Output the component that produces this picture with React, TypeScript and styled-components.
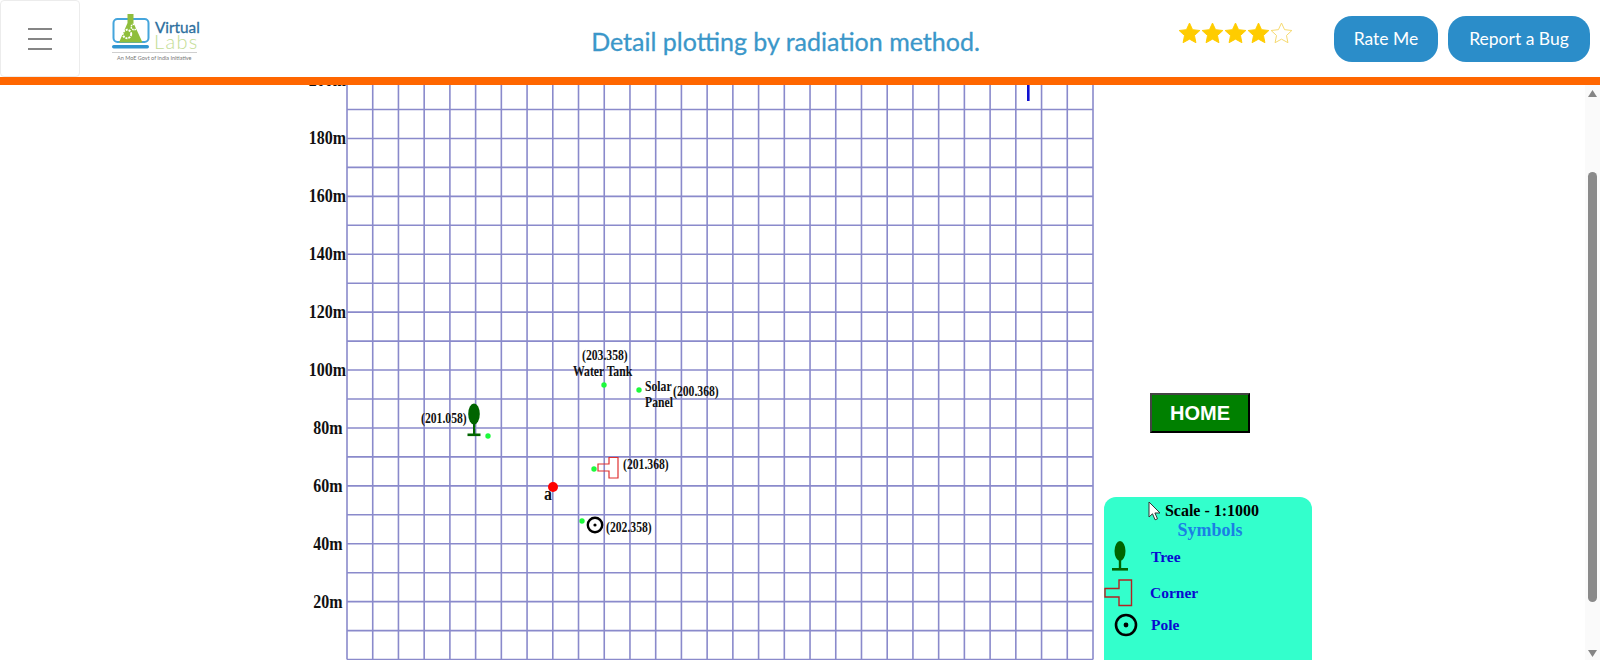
import { useEffect, useRef } from "react";
import styled, { createGlobalStyle } from "styled-components";

const Global = createGlobalStyle`
  html, body { margin: 0; padding: 0; height: 100%; overflow: hidden; background: #fff; }
  #root { height: 100%; }
`;

const Page = styled.div`
  height: 660px;
  display: flex;
  flex-direction: column;
  font-family: "Liberation Serif", serif;
`;

const Header = styled.header`
  flex: none;
  height: 77px;
  display: flex;
  align-items: stretch;
  border-bottom: 8px solid #ff6600;
  background: #fff;
`;

const MenuButton = styled.button`
  flex: none;
  width: 80px;
  height: 77px;
  padding: 0;
  background: #fff;
  border: 1px solid #ececec;
  border-radius: 4px;
  display: flex;
  flex-direction: column;
  align-items: center;
  justify-content: center;
  gap: 8px;
`;

const MenuBar = styled.span`
  display: block;
  width: 24px;
  height: 2px;
  background: #858585;
`;

const LogoBox = styled.div`
  flex: none;
  margin: 12px 0 0 31px;
  width: 90px;
  height: 52px;
`;

const Title = styled.h1`
  flex: 1;
  margin: 9px 0 0;
  text-align: center;
  font: 400 25px "Lato", sans-serif;
  -webkit-text-stroke: 0.3px #3b97c9;
  line-height: 64px;
  color: #3b97c9;
  padding-left: 192px;
  white-space: nowrap;
`;

const Rating = styled.div`
  flex: none;
  display: flex;
  margin: 21px 41px 0 0;
  height: 24px;
`;

const HeaderButton = styled.button<{ $w: number }>`
  flex: none;
  width: ${({ $w }) => $w}px;
  height: 46px;
  margin: 16px 10px 0 0;
  padding: 0 0 2px;
  border: none;
  border-radius: 18px;
  background: #2b8dc9;
  color: #fff;
  font: 400 17.5px "Lato", sans-serif;
`;

const Body = styled.div`
  flex: 1;
  min-height: 0;
  display: flex;
`;

const Scroller = styled.main`
  flex: 1;
  overflow: hidden;
`;

const ScrollBar = styled.div`
  flex: none;
  width: 15px;
  background: #fafafa;
  display: flex;
  flex-direction: column;
  align-items: center;
`;

const ScrollArrow = styled.span<{ $down?: boolean }>`
  display: block;
  width: 9px;
  height: 7px;
  margin-top: ${({ $down }) => ($down ? 48 : 5)}px;
  background: #858585;
  clip-path: ${({ $down }) =>
    $down ? "polygon(0 0, 100% 0, 50% 100%)" : "polygon(50% 0, 100% 100%, 0 100%)"};
`;

const ScrollThumb = styled.span`
  display: block;
  width: 9px;
  height: 430px;
  margin-top: 75px;
  border-radius: 5px;
  background: #8a8a8a;
`;

const Content = styled.div`
  height: 735px;
  display: flex;
  align-items: flex-start;
`;

const PlotSheet = styled.div`
  flex: none;
  width: 1094px;
  height: 735px;
`;

const Side = styled.aside`
  flex: none;
  margin-left: 10px;
  width: 208px;
  padding-top: 406px;
`;

const HomeButton = styled.button`
  display: block;
  margin-left: 46px;
  width: 100px;
  height: 40px;
  padding: 0;
  background: #008000;
  color: #fff;
  font: 700 20px "Liberation Sans", sans-serif;
  border: 2px solid;
  border-color: #444 #000 #000 #444;
`;

const Legend = styled.section`
  position: relative;
  margin-top: 64px;
  height: 200px;
  background: #33ffcc;
  border-radius: 12px 12px 0 0;
`;

const ScaleText = styled.div`
  padding: 4px 0 0 8px;
  text-align: center;
  font-size: 16px;
  font-weight: 700;
  line-height: 19px;
  color: #000;
`;

const SymbolsTitle = styled.div`
  padding-left: 4px;
  text-align: center;
  font-size: 18px;
  font-weight: 700;
  line-height: 20px;
  color: #1a80e4;
`;

const LegendRow = styled.div<{ $h: number; $gap: number }>`
  display: flex;
  align-items: center;
  height: ${({ $h }) => $h}px;
  gap: ${({ $gap }) => $gap}px;
`;

const LegendIcon = styled.span<{ $left: number; $w: number }>`
  display: flex;
  justify-content: center;
  margin-left: ${({ $left }) => $left}px;
  width: ${({ $w }) => $w}px;
`;

const LegendLabel = styled.span`
  font-size: 15.5px;
  font-weight: 700;
  color: #0a0ad0;
`;

const Cursor = styled.svg`
  position: absolute;
  left: 44px;
  top: 4px;
`;

const Star = ({ filled }: { filled: boolean }) => (
  <svg width="23" height="24" viewBox="0 0 24 24">
    <path
      d="M12 1.6l3.2 6.9 7.6.9-5.6 5.2 1.5 7.5L12 18.4l-6.7 3.7 1.5-7.5L1.2 9.4l7.6-.9z"
      fill={filled ? "#ffcc00" : "#fff"}
      stroke={filled ? "#ffcc00" : "#f5d76a"}
      strokeWidth="1"
    />
  </svg>
);

const Logo = () => (
  <svg width="90" height="52" viewBox="0 0 90 52">
    <rect x="2.5" y="7" width="35" height="23" rx="4" fill="none" stroke="#45a5dc" strokeWidth="2" />
    <rect x="1" y="33" width="37" height="3.5" rx="1.7" fill="#2f95d0" />
    <path d="M16.5 2h6v9l9 19.5H8l8.5-19.5z" fill="#8fbe3c" />
    <circle cx="16" cy="22" r="4.2" fill="none" stroke="#fff" strokeWidth="2" strokeDasharray="2 1" />
    <circle cx="23" cy="15" r="2.8" fill="none" stroke="#fff" strokeWidth="1.5" strokeDasharray="1.5 .8" />
    <text x="44" y="20.5" fontFamily="Lato, sans-serif" fontSize="15.3" fill="#2d6f9e" stroke="#2d6f9e" strokeWidth="0.3">
      Virtual
    </text>
    <text x="43" y="36.5" fontFamily="Lato, sans-serif" fontSize="20" fontWeight="300" letterSpacing="1.3" fill="#c3dd94">
      Labs
    </text>
    <rect x="1" y="40" width="85" height="1" fill="#cfcfcf" />
    <text x="6" y="47.5" fontFamily="Lato, sans-serif" fontSize="5.5" fill="#777">
      An MoE Govt of India Initiative
    </text>
  </svg>
);

const TreeIcon = () => (
  <svg width="16" height="32" viewBox="0 0 16 32">
    <ellipse cx="8" cy="10" rx="5.5" ry="10" fill="#006400" />
    <rect x="6.8" y="16" width="2.4" height="13" fill="#006400" />
    <rect x="0" y="27" width="16" height="2.6" fill="#006400" />
  </svg>
);

const CornerIcon = () => (
  <svg width="29" height="28" viewBox="0 0 29 28">
    <path d="M1 9.5h14V1h12.5v25.5H15V18H1z" fill="none" stroke="#b52222" strokeWidth="1.4" />
  </svg>
);

const PoleIcon = () => (
  <svg width="24" height="24" viewBox="0 0 24 24">
    <circle cx="12" cy="12" r="10" fill="none" stroke="#000" strokeWidth="2.6" />
    <circle cx="12" cy="12" r="2.4" fill="#000" />
  </svg>
);

const LEFT = 347;
const RIGHT = 1093;
const COLS = 29;
const ROWS = 23;
const TOP_Y = 6.7;
const ROW_H = 28.95;
const OFFSET = 13; // plot y = screen y + OFFSET, once scrolled
const STRETCH = 1.18; // the sheet in the picture is stretched up and down

const yOf = (screen: number) => screen + OFFSET;

const PlotText = ({ x, y, size, anchor, children }: { x: number; y: number; size?: number; anchor?: "end"; children: string }) => (
  <text transform={`translate(${x} ${yOf(y)}) scale(1 ${STRETCH})`} fontSize={size} textAnchor={anchor}>
    {children}
  </text>
);

const Plot = () => {
  const cell = (RIGHT - LEFT) / COLS;
  const bottom = TOP_Y + ROWS * ROW_H;
  return (
    <svg width="1094" height="735" style={{ display: "block" }}>
      {Array.from({ length: COLS + 1 }, (_, i) => (
        <line key={i} x1={LEFT + i * cell} x2={LEFT + i * cell} y1={TOP_Y} y2={bottom} stroke="#8a8acb" strokeWidth="1.6" />
      ))}
      {Array.from({ length: ROWS + 1 }, (_, i) => (
        <line key={i} y1={TOP_Y + i * ROW_H} y2={TOP_Y + i * ROW_H} x1={LEFT} x2={RIGHT} stroke="#8a8acb" strokeWidth="1.6" />
      ))}
      <g fontFamily="Liberation Serif, serif" fontWeight="700" fontSize="16" fill="#111">
        {[200, 180, 160, 140, 120, 100, 80, 60, 40, 20].map((v, i) => (
          <PlotText key={v} x={v >= 100 ? 346 : 342.5} y={86 + i * 57.95} anchor="end">
            {`${v}m`}
          </PlotText>
        ))}
      </g>
      <rect x="1027" y={yOf(85)} width="2.6" height="16" fill="#1010d0" />
      <g fontFamily="Liberation Serif, serif" fontWeight="700" fontSize="11.7" fill="#111">
        <PlotText x={582} y={360}>(203.358)</PlotText>
        <PlotText x={573} y={376}>Water Tank</PlotText>
        <PlotText x={645} y={391}>Solar</PlotText>
        <PlotText x={645} y={407}>Panel</PlotText>
        <PlotText x={673} y={396}>(200.368)</PlotText>
        <PlotText x={421} y={423}>(201.058)</PlotText>
        <PlotText x={623} y={469}>(201.368)</PlotText>
        <PlotText x={606} y={532}>(202.358)</PlotText>
        <PlotText x={544} y={500} size={16}>a</PlotText>
      </g>
      <g fill="#1dfa3c">
        <circle cx="604" cy={yOf(385)} r="2.7" />
        <circle cx="639" cy={yOf(390)} r="2.7" />
        <circle cx="488" cy={yOf(436)} r="2.7" />
        <circle cx="594" cy={yOf(469)} r="2.7" />
        <circle cx="582" cy={yOf(521)} r="2.7" />
      </g>
      <circle cx="553" cy={yOf(487)} r="5" fill="#ff0000" />
      <g fill="#006400">
        <ellipse cx="474" cy={yOf(414)} rx="5.8" ry="10.5" />
        <rect x="473" y={yOf(420)} width="2.2" height="15" />
        <rect x="467.5" y={yOf(433.5)} width="13" height="2.6" />
      </g>
      <path d={`M598 ${yOf(464)}h11v-6.5h9v20.5h-9v-7h-11z`} fill="none" stroke="#e03030" strokeWidth="1.2" />
      <circle cx="595" cy={yOf(525)} r="7.2" fill="#fff" stroke="#000" strokeWidth="2.4" />
      <circle cx="595" cy={yOf(525)} r="1.6" fill="#000" />
    </svg>
  );
};

export default function App() {
  const scroller = useRef<HTMLElement>(null);

  useEffect(() => {
    if (scroller.current) scroller.current.scrollTop = 98;
  }, []);

  return (
    <Page>
      <Global />
      <Header>
        <MenuButton aria-label="menu">
          <MenuBar />
          <MenuBar />
          <MenuBar />
        </MenuButton>
        <LogoBox>
          <Logo />
        </LogoBox>
        <Title>Detail plotting by radiation method.</Title>
        <Rating>
          {[true, true, true, true, false].map((f, i) => (
            <Star key={i} filled={f} />
          ))}
        </Rating>
        <HeaderButton $w={104}>Rate Me</HeaderButton>
        <HeaderButton $w={142}>Report a Bug</HeaderButton>
      </Header>
      <Body>
        <Scroller ref={scroller}>
          <Content>
            <PlotSheet>
              <Plot />
            </PlotSheet>
            <Side>
              <HomeButton>HOME</HomeButton>
              <Legend>
                <Cursor width="13" height="20" viewBox="0 0 13 20">
                  <path d="M1 1v15l3.5-3.2 2.6 6 2.4-1-2.6-5.8H12z" fill="#fff" stroke="#333" strokeWidth="1" />
                </Cursor>
                <ScaleText>Scale - 1:1000</ScaleText>
                <SymbolsTitle>Symbols</SymbolsTitle>
                <LegendRow $h={34} $gap={23}>
                  <LegendIcon $left={8} $w={16}><TreeIcon /></LegendIcon>
                  <LegendLabel>Tree</LegendLabel>
                </LegendRow>
                <LegendRow $h={38} $gap={17}>
                  <LegendIcon $left={0} $w={29}><CornerIcon /></LegendIcon>
                  <LegendLabel>Corner</LegendLabel>
                </LegendRow>
                <LegendRow $h={26} $gap={13}>
                  <LegendIcon $left={10} $w={24}><PoleIcon /></LegendIcon>
                  <LegendLabel>Pole</LegendLabel>
                </LegendRow>
              </Legend>
            </Side>
          </Content>
        </Scroller>
        <ScrollBar>
          <ScrollArrow />
          <ScrollThumb />
          <ScrollArrow $down />
        </ScrollBar>
      </Body>
    </Page>
  );
}
